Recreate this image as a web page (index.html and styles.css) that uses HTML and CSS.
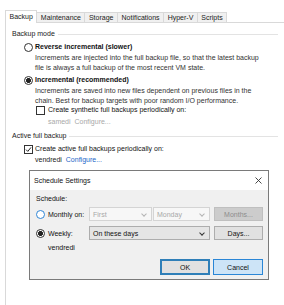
FILE: index.html
```html
<!DOCTYPE html>
<html lang="en">
<head>
  <meta charset="UTF-8">
  <title>Backup settings</title>
  <link rel="stylesheet" href="styles.css">
</head>
<body>
  <div class="tabs">
    <div class="tab active">Backup</div>
    <div class="tab">Maintenance</div>
    <div class="tab">Storage</div>
    <div class="tab">Notifications</div>
    <div class="tab">Hyper-V</div>
    <div class="tab">Scripts</div>
  </div>

  <div class="panel">
    <div class="group-title"><span>Backup mode</span></div>

    <div class="option first">
      <span class="radio"></span>
      <span class="strong">Reverse incremental (slower)</span>
    </div>
    <p class="desc">Increments are injected into the full backup file, so that the latest backup<br>file is always a full backup of the most recent VM state.</p>

    <div class="option second">
      <span class="radio checked"></span>
      <span class="strong">Incremental (recommended)</span>
    </div>
    <p class="desc">Increments are saved into new files dependent on previous files in the<br>chain. Best for backup targets with poor random I/O performance.</p>

    <div class="option sub">
      <span class="checkbox"></span>
      <span>Create synthetic full backups periodically on:</span>
    </div>
    <div class="schedule-line disabled">samedi <span class="link">Configure...</span></div>

    <div class="group-title active-group"><span>Active full backup</span></div>
    <div class="option first">
      <span class="checkbox checked">
        <svg width="7" height="7" viewBox="0 0 7 7"><path d="M1 3.6 L2.8 5.4 L6 1.4" fill="none" stroke="#222" stroke-width="1"/></svg>
      </span>
      <span>Create active full backups periodically on:</span>
    </div>
    <div class="schedule-line top">vendredi <span class="link">Configure...</span></div>

    <!-- schedule window opened from Configure... -->
    <div class="dialog">
      <div class="dialog-title">
        <span>Schedule Settings</span>
        <svg width="7" height="7" viewBox="0 0 7 7"><path d="M0.5 0.5 L6.5 6.5 M6.5 0.5 L0.5 6.5" stroke="#333" stroke-width="0.9"/></svg>
      </div>
      <div class="dialog-body">
        <div class="caption">Schedule:</div>

        <div class="row">
          <span class="row-label"><span class="radio focus"></span>Monthly on:</span>
          <span class="select disabled first-select">First<i class="chevron"></i></span>
          <span class="select disabled day-select">Monday<i class="chevron"></i></span>
          <span class="btn disabled">Months...</span>
        </div>

        <div class="row weekly">
          <span class="row-label"><span class="radio checked"></span>Weekly:</span>
          <span class="select wide">On these days<i class="chevron"></i></span>
          <span class="btn">Days...</span>
        </div>

        <div class="days">vendredi</div>

        <div class="actions">
          <span class="btn default">OK</span>
          <span class="btn hover">Cancel</span>
        </div>
      </div>
    </div>
  </div>
</body>
</html>
```

FILE: styles.css
```css
body {
  margin: 0;
  width: 284px;
  height: 305px;
  overflow: hidden;
  background-color: #fff;
  color: #111;
  font-family: "Liberation Sans", Arial, sans-serif;
  font-size: 7px;
}
p {
  margin: 0;
}

/* tab strip */
.tabs {
  display: flex;
  align-items: flex-end;
  height: 12px;
  padding: 10px 0 0 5px;
}
.tab {
  box-sizing: border-box;
  height: 10px;
  line-height: 9px;
  padding: 0 3.5px;
  margin-right: -1px;
  border: 1px solid #d9d9d9;
  border-bottom: none;
  background-color: #f0f0f0;
  color: #222;
}
.tab.active {
  position: relative;
  z-index: 1;
  height: 13px;
  line-height: 11px;
  margin-bottom: -1px;
  background-color: #fff;
}

/* settings panel */
.panel {
  height: 276px;
  margin-left: 5px;
  padding: 6px 0 0 6px;
  border-left: 1px solid #d9d9d9;
  border-top: 1px solid #d9d9d9;
}
.group-title {
  display: flex;
  align-items: center;
  gap: 3px;
  width: 266px;
  height: 10px;
  line-height: 10px;
  color: #222;
}
.group-title::after {
  content: "";
  flex: 1;
  border-top: 1px solid #e3e3e3;
}
.active-group {
  margin-top: 4px;
}

.option {
  display: flex;
  align-items: center;
  gap: 2px;
  height: 10px;
  line-height: 10px;
  margin-left: 12px;
}
.option.first {
  margin-top: 3px;
}
.option.second {
  margin-top: 2px;
}
.option.sub {
  margin-top: -1px;
  margin-left: 24px;
  gap: 3px;
}
.strong {
  font-weight: bold;
}
.desc {
  margin: 1px 0 0 23px;
  line-height: 10px;
  color: #333;
}

.radio {
  box-sizing: border-box;
  display: inline-block;
  flex: none;
  width: 9px;
  height: 9px;
  border: 1px solid #333;
  border-radius: 50%;
  background-color: #fff;
}
.radio.checked {
  background: radial-gradient(circle, #222 0 2.2px, #fff 2.6px);
}
.radio.focus {
  border-color: #2f86d6;
}
.checkbox {
  box-sizing: border-box;
  display: inline-flex;
  align-items: center;
  justify-content: center;
  flex: none;
  width: 9px;
  height: 9px;
  border: 1px solid #333;
  background-color: #fff;
}

.schedule-line {
  margin: 2px 0 0 36px;
  line-height: 10px;
  color: #222;
}
.schedule-line.top {
  margin: 1px 0 0 23px;
}
.schedule-line.disabled,
.schedule-line.disabled .link {
  color: #a8a8a8;
}
.link {
  margin-left: 2px;
  color: #1a66c8;
}

/* schedule window */
.dialog {
  box-sizing: border-box;
  width: 240px;
  height: 110px;
  margin: 5px 0 0 17px;
  border: 1px solid #7a7a7a;
  background-color: #f0f0f0;
}
.dialog-title {
  display: flex;
  align-items: center;
  justify-content: space-between;
  height: 19px;
  padding: 0 6px 0 4px;
  background-color: #fff;
  color: #111;
}
.dialog-body {
  padding: 4px 5px 0 6px;
}
.caption {
  line-height: 10px;
}
.row {
  display: flex;
  align-items: center;
  height: 14px;
  margin-top: 3px;
}
.row.weekly {
  margin-top: 5px;
}
.row-label {
  display: flex;
  align-items: center;
  gap: 3px;
  width: 53px;
}
.select {
  box-sizing: border-box;
  position: relative;
  display: flex;
  align-items: center;
  height: 14px;
  padding-left: 3px;
  border: 1px solid #adadad;
  background-color: #e5e5e5;
  color: #111;
}
.select.disabled {
  border-color: #d4d4d4;
  background-color: #f7f7f7;
  color: #a8a8a8;
}
.first-select {
  width: 63px;
  margin-right: 1px;
}
.day-select {
  width: 57px;
  margin-right: 4px;
}
.wide {
  width: 121px;
  margin-right: 4px;
}
.chevron {
  position: absolute;
  right: 5px;
  top: 4px;
  width: 3px;
  height: 3px;
  border-right: 1px solid #333;
  border-bottom: 1px solid #333;
  transform: rotate(45deg);
}
.select.disabled .chevron {
  border-color: #b4b4b4;
}

.btn {
  box-sizing: border-box;
  display: flex;
  align-items: center;
  justify-content: center;
  width: 49px;
  height: 14px;
  border: 1px solid #adadad;
  background-color: #e1e1e1;
  color: #111;
}
.btn.disabled {
  border-color: #bfbfbf;
  background-color: #cccccc;
  color: #8c8c8c;
}
.days {
  margin: 3px 0 0 12px;
  line-height: 10px;
}
.actions {
  display: flex;
  justify-content: flex-end;
  gap: 3px;
  margin-top: 6px;
}
.actions .btn {
  width: 50px;
  height: 16px;
}
.btn.default {
  border: 2px solid #2f7fb8;
}
.btn.hover {
  border-color: #2a86d6;
  background-color: #cde4f7;
}
```
